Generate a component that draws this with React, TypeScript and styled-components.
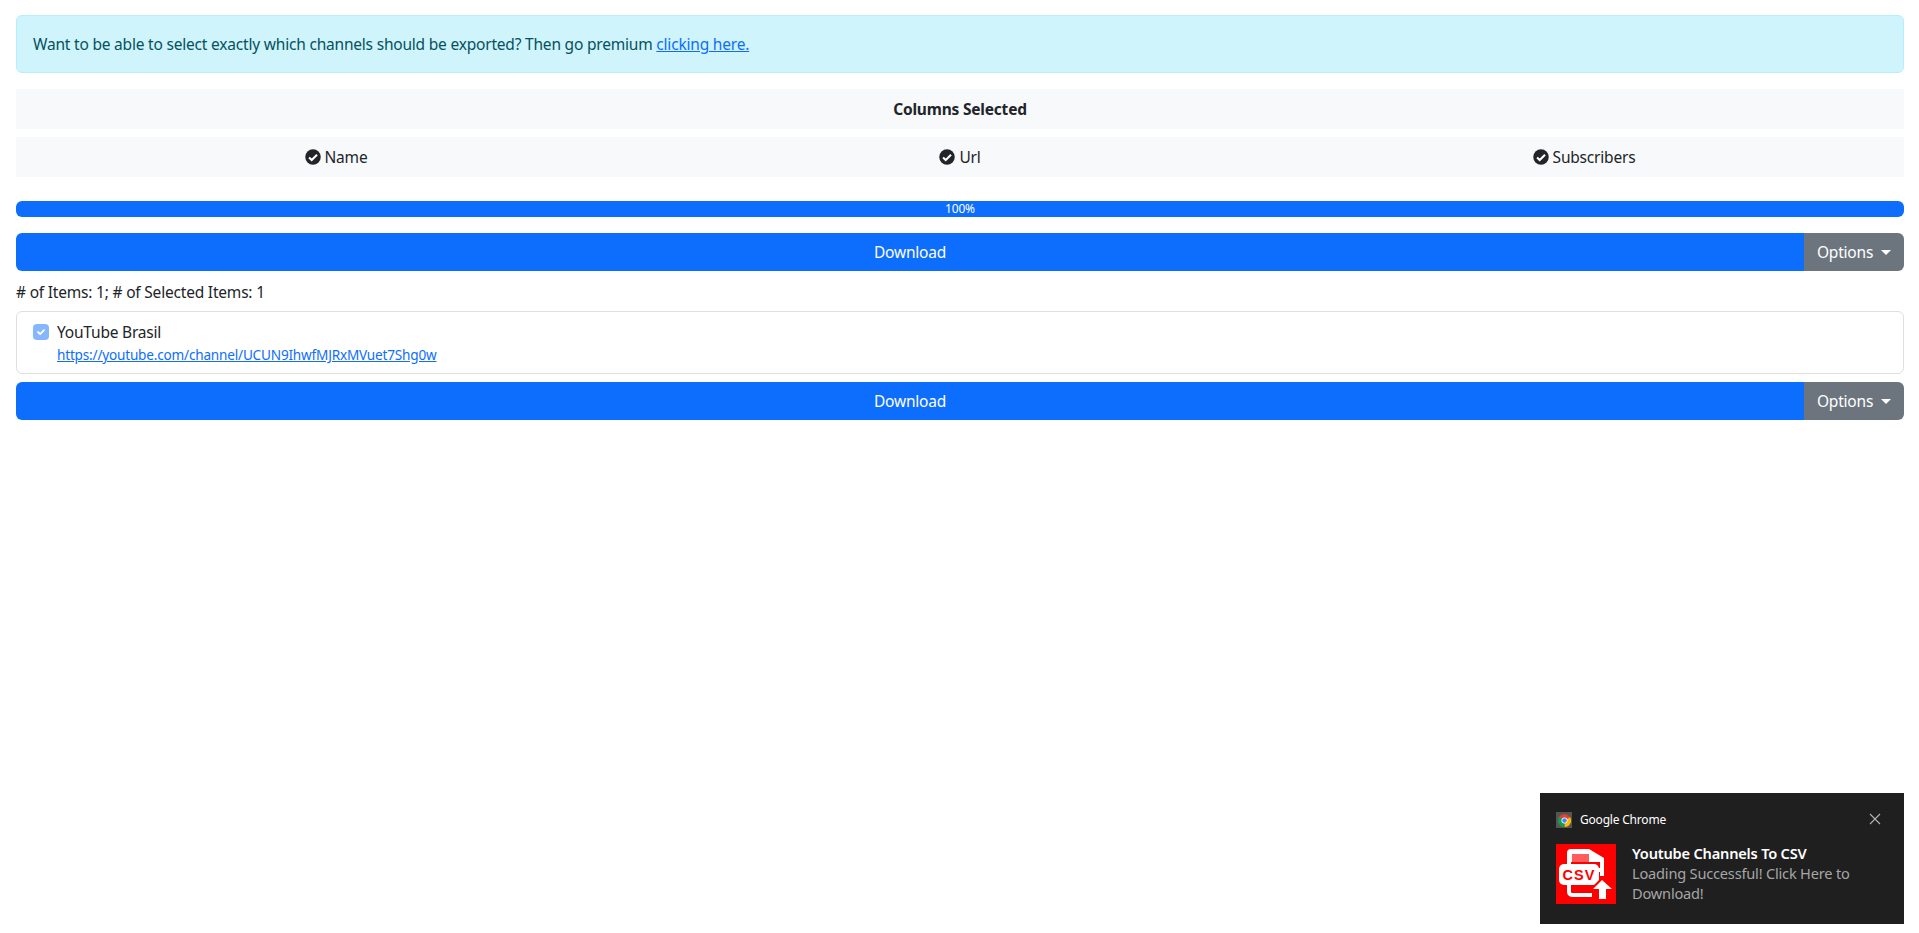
import React from "react";
import styled, { createGlobalStyle } from "styled-components";

const Global = createGlobalStyle`
  html, body { margin: 0; padding: 0; background: #fff; }
  body {
    font-family: "Noto Sans", "Open Sans", sans-serif;
    font-size: 15.5px;
    line-height: 24px;
    color: #212529;
    letter-spacing: -0.2px;
  }
  * { box-sizing: border-box; }
`;

const Page = styled.main`
  display: flex;
  flex-direction: column;
  padding: 15px 15px 0 16px;
`;

const Alert = styled.div`
  height: 58px;
  padding: 16px;
  background: #cff4fc;
  border: 1px solid #b6effb;
  border-radius: 6px;
  color: #055160;
  margin-bottom: 16px;
`;

const AlertLink = styled.a`
  color: #0d6efd;
  text-decoration: underline;
`;

const HeaderRow = styled.div`
  height: 40px;
  padding: 8px;
  background: #f8f9fa;
  font-weight: 700;
  text-align: center;
  color: #212529;
  margin-bottom: 8px;
`;

const ColumnsRow = styled.div`
  height: 40px;
  padding: 8px;
  background: #f8f9fa;
  display: grid;
  grid-template-columns: repeat(3, 624px);
  justify-content: center;
  margin-bottom: 24px;
`;

const ColumnItem = styled.div`
  display: flex;
  align-items: center;
  justify-content: center;
  gap: 4px;
`;

const Progress = styled.div`
  height: 16px;
  border-radius: 6px;
  background: #0d6efd;
  color: #fff;
  font-size: 12px;
  line-height: 16px;
  text-align: center;
  margin-bottom: 16px;
`;

const ButtonGroup = styled.div`
  display: flex;
  height: 38px;
`;

const MainButton = styled.button`
  flex: 1;
  border: 0;
  font: inherit;
  letter-spacing: inherit;
  color: #fff;
  background: #0d6efd;
  border-radius: 6px 0 0 6px;
  padding: 0;
`;

const OptionsButton = styled.button`
  width: 100px;
  border: 0;
  font: inherit;
  letter-spacing: inherit;
  color: #fff;
  background: #6c757d;
  border-radius: 0 6px 6px 0;
  display: flex;
  align-items: center;
  justify-content: center;
  gap: 8px;
  padding: 0;
`;

const Caret = styled.span`
  width: 0;
  height: 0;
  border-top: 5px solid #fff;
  border-left: 5px solid transparent;
  border-right: 5px solid transparent;
`;

const Counts = styled.div`
  margin: 9px 0 7px;
`;

const Card = styled.div`
  height: 63px;
  padding: 8px 16px;
  border: 1px solid #dfdfdf;
  border-radius: 6px;
  margin-bottom: 8px;
  display: grid;
  grid-template-columns: 16px 1fr;
  column-gap: 8px;
`;

const Check = styled.span`
  width: 16px;
  height: 16px;
  margin-top: 4px;
  border-radius: 4px;
  background: #86b7fe;
  display: flex;
  align-items: center;
  justify-content: center;
`;

const ChannelName = styled.div`
  line-height: 24px;
`;

const ChannelLink = styled.a`
  display: block;
  grid-column: 2;
  font-size: 13.6px;
  line-height: 21px;
  color: #0d6efd;
  text-decoration: underline;
`;

const Toast = styled.aside`
  position: fixed;
  left: 1540px;
  top: 793px;
  width: 364px;
  height: 131px;
  background: #1f1f1f;
  padding: 19px 16px 0;
  font-family: "Noto Sans", sans-serif;
  letter-spacing: -0.2px;
`;

const ToastHead = styled.div`
  display: flex;
  align-items: center;
  height: 16px;
  gap: 8px;
  color: #fff;
  font-size: 12px;
  line-height: 16px;
`;

const ChromeBadge = styled.span`
  width: 16px;
  height: 16px;
  background: #555;
  display: flex;
  align-items: center;
  justify-content: center;
`;

const Close = styled.span`
  margin-left: auto;
  margin-right: 7px;
  margin-top: -2px;
  display: flex;
`;

const ToastBody = styled.div`
  display: flex;
  gap: 16px;
  margin-top: 16px;
`;

const ToastText = styled.div`
  display: flex;
  flex-direction: column;
  margin-top: -1px;
  font-size: 14.6px;
  line-height: 20px;
  color: #a6a6a6;
`;

const ToastTitle = styled.div`
  color: #fff;
  font-weight: 600;
`;

const Logo = styled.svg`
  flex: none;
  display: block;
`;

const CheckCircle = () => (
  <svg width="16" height="16" viewBox="0 0 512 512" aria-hidden="true">
    <circle cx="256" cy="256" r="248" fill="#212529" />
    <path d="M130 270l85 85 170-170" fill="none" stroke="#fff" strokeWidth="66" />
  </svg>
);

const Download = () => (
  <ButtonGroup>
    <MainButton>Download</MainButton>
    <OptionsButton>
      Options <Caret />
    </OptionsButton>
  </ButtonGroup>
);

export default function App() {
  return (
    <>
      <Global />
      <Page>
        <Alert>
          Want to be able to select exactly which channels should be exported? Then go premium{" "}
          <AlertLink href="#">clicking here.</AlertLink>
        </Alert>
        <HeaderRow>Columns Selected</HeaderRow>
        <ColumnsRow>
          {["Name", "Url", "Subscribers"].map((c) => (
            <ColumnItem key={c}>
              <CheckCircle />
              {c}
            </ColumnItem>
          ))}
        </ColumnsRow>
        <Progress>100%</Progress>
        <Download />
        <Counts># of Items: 1; # of Selected Items: 1</Counts>
        <Card>
          <Check>
            <svg width="12" height="12" viewBox="0 0 20 20" aria-hidden="true">
              <path d="M5 10l3.5 3.5L15 7" fill="none" stroke="#fff" strokeWidth="3" strokeLinecap="round" strokeLinejoin="round" />
            </svg>
          </Check>
          <ChannelName>YouTube Brasil</ChannelName>
          <ChannelLink href="#">https://youtube.com/channel/UCUN9IhwfMJRxMVuet7Shg0w</ChannelLink>
        </Card>
        <Download />
      </Page>
      <Toast>
        <ToastHead>
          <ChromeBadge>
            <svg width="13" height="13" viewBox="0 0 24 24" aria-hidden="true">
              <circle cx="12" cy="12" r="12" fill="#db4437" />
              <path d="M12 12L22.4 6A12 12 0 0 1 12 24z" fill="#fbbc05" />
              <path d="M12 12L12 24A12 12 0 0 1 1.6 6z" fill="#0f9d58" />
              <circle cx="12" cy="12" r="5.6" fill="#fff" />
              <circle cx="12" cy="12" r="4.2" fill="#4285f4" />
            </svg>
          </ChromeBadge>
          Google Chrome
          <Close>
            <svg width="12" height="12" viewBox="0 0 12 12" aria-hidden="true">
              <path d="M1 1l10 10M11 1L1 11" stroke="#b4b4b4" strokeWidth="1.1" />
            </svg>
          </Close>
        </ToastHead>
        <ToastBody>
          <Logo width="60" height="60" viewBox="0 0 60 60" aria-hidden="true">
            <rect width="60" height="60" fill="#f00" />
            <path d="M11 9a4 4 0 0 1 4-4h18l15 9v14H11z" fill="#fff" />
            <path d="M16 10h17v8H16z" fill="#ff5c5c" />
            <rect x="15" y="18" width="29" height="6" fill="#f00" />
            <rect x="3" y="20" width="40" height="21" rx="5" fill="#fff" />
            <text x="23" y="36" textAnchor="middle" fontFamily="Liberation Sans" fontWeight="700" fontSize="14.5" letterSpacing="1" fill="#f00">CSV</text>
            <path d="M13 40v8a3 3 0 0 0 3 3h20" fill="none" stroke="#fff" strokeWidth="4" />
            <path d="M46 21v11" stroke="#fff" strokeWidth="4" />
            <path d="M46 33l-12 12h6v12h12V45h6z" fill="#f00" />
            <path d="M46 36l-9 9h6v10h7V45h6z" fill="#fff" />
          </Logo>
          <ToastText>
            <ToastTitle>Youtube Channels To CSV</ToastTitle>
            <span>Loading Successful! Click Here to Download!</span>
          </ToastText>
        </ToastBody>
      </Toast>
    </>
  );
}
